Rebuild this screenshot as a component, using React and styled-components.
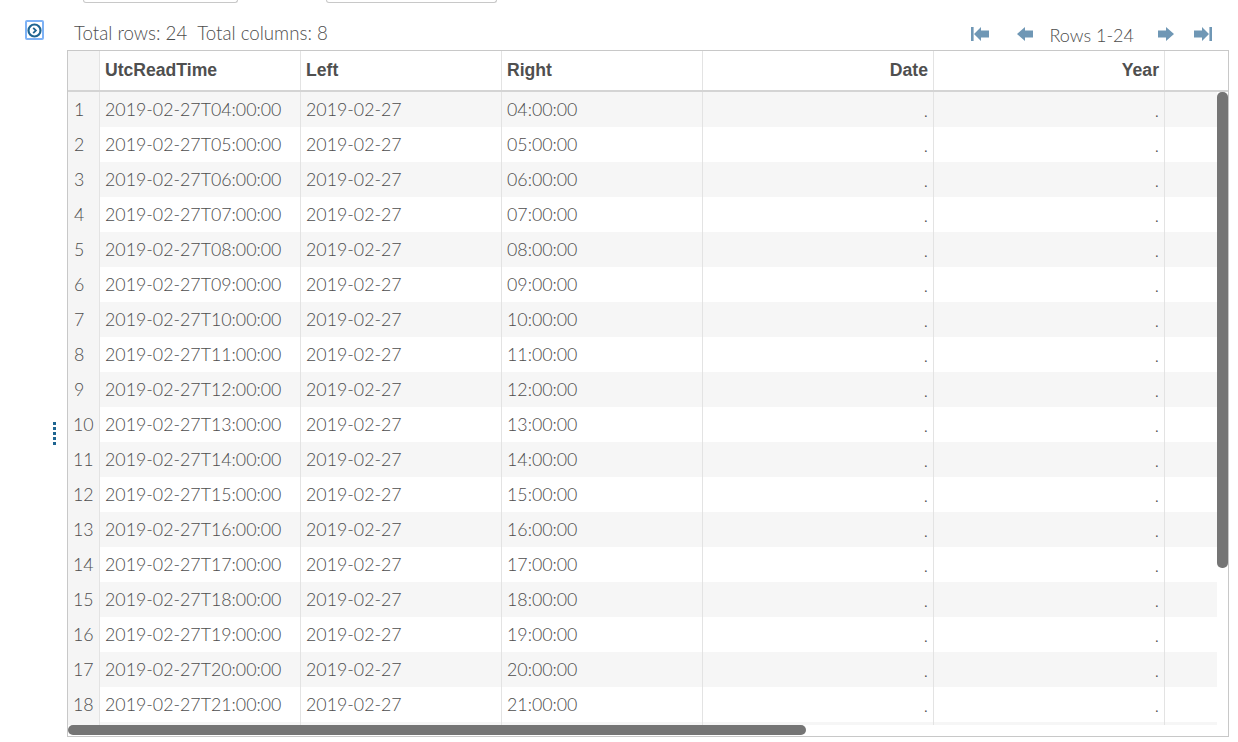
import React from "react";
import styled, { createGlobalStyle } from "styled-components";

const Global = createGlobalStyle`
  html, body { margin: 0; padding: 0; background: #fff; height: 742px; overflow: hidden; }
  * { box-sizing: border-box; }
`;

const Page = styled.div`
  width: 1238px;
  height: 742px;
  overflow: hidden;
  display: flex;
  flex-direction: column;
  font-family: Lato, sans-serif;
  font-weight: 300;
  color: #4d4d4d;
`;

const FilterBar = styled.div`
  height: 3px;
  display: flex;
  padding-left: 83px;
  gap: 88px;
`;

const FilterField = styled.div`
  width: ${(p) => p.$w}px;
  height: 3px;
  background: #fff;
  border: 1px solid #c8c8c8;
  border-top: none;
  border-radius: 0 0 3px 3px;
`;

const Body = styled.div`
  display: flex;
  height: 734px;
  padding-top: 17px;
`;

const Gutter = styled.div`
  width: 67px;
  flex: none;
  display: flex;
  flex-direction: column;
  align-items: flex-start;
  padding-left: 25px;
`;

const ToggleButton = styled.div`
  width: 19px;
  height: 20px;
  background: #fff;
  border: 2px solid #7eb2f5;
  border-radius: 2px;
  display: flex;
  align-items: center;
  justify-content: center;
`;

const SplitterDots = styled.div`
  margin: 382px 0 0 28px;
  width: 3px;
  height: 23px;
  background: repeating-linear-gradient(to bottom, #1f6591 0 3px, transparent 3px 5px);
`;

const Main = styled.div`
  width: 1162px;
  flex: none;
  display: flex;
  flex-direction: column;
`;

const Toolbar = styled.div`
  height: 30px;
  display: flex;
  align-items: flex-start;
  justify-content: space-between;
  padding: 3px 17px 0 7px;
  font-size: 18px;
  line-height: 22px;
`;

const Totals = styled.div`
  display: flex;
  gap: 10px;
  font-size: 18.7px;
  margin-top: -1px;
`;

const Pager = styled.div`
  display: flex;
  align-items: center;
  height: 22px;
`;

const PagerIcon = styled.svg`
  width: ${(p) => p.$w}px;
  height: 14px;
  flex: none;
  margin-left: ${(p) => p.$ml || 0}px;
  fill: #6f97b5;
`;

const PagerLabel = styled.span`
  margin: 2px 24px 0 16px;
  white-space: nowrap;
`;

const GridBox = styled.div`
  position: relative;
  height: 687px;
  border: 1px solid #c8c8c8;
  overflow: hidden;
`;

const HeaderRow = styled.div`
  display: flex;
  height: 41px;
  border-bottom: 2px solid #d4d4d4;
`;

const HeaderCell = styled.div`
  width: ${(p) => p.$w}px;
  flex: none;
  height: 39px;
  padding: 0 5px;
  display: flex;
  align-items: center;
  justify-content: ${(p) => (p.$right ? "flex-end" : "flex-start")};
  font-family: "Liberation Sans", Arial, sans-serif;
  font-weight: 700;
  font-size: 17.6px;
  color: #4f4f4f;
  background: ${(p) => (p.$corner ? "#f5f5f5" : "#fff")};
  border-right: ${(p) => (p.$last ? "none" : "1px solid #e3e3e3")};
`;

const DataRow = styled.div`
  display: flex;
  width: 1149px;
  height: 35px;
  background: ${(p) => (p.$odd ? "#f6f6f6" : "#fff")};
`;

const RowNumber = styled.div`
  width: 32px;
  flex: none;
  padding: 0 0 2px ${(p) => (p.$wide ? 5 : 6)}px;
  display: flex;
  align-items: center;
  font-size: 17.8px;
  background: #f5f5f5;
  border-right: 1px solid #e3e3e3;
`;

const DataCell = styled.div`
  width: ${(p) => p.$w}px;
  flex: none;
  padding: ${(p) => (p.$right ? "1px 5px 0" : "0 5px 2px")};
  display: flex;
  align-items: center;
  justify-content: ${(p) => (p.$right ? "flex-end" : "flex-start")};
  font-size: 17.8px;
  border-right: ${(p) => (p.$last ? "none" : "1px solid #e3e3e3")};
`;

const VTrack = styled.div`
  position: absolute;
  top: 41px;
  right: 0;
  bottom: 0;
  width: 11px;
  background: #fff;
`;

const VThumb = styled.div`
  position: absolute;
  top: 0;
  right: 0;
  width: 11px;
  height: 476px;
  background: #757575;
  border-radius: 5px;
`;

const HTrack = styled.div`
  position: absolute;
  left: 0;
  right: 0;
  bottom: 0;
  height: 11px;
  background: #fff;
`;

const HThumb = styled.div`
  position: absolute;
  top: 0;
  left: 0;
  width: 738px;
  height: 10px;
  background: #757575;
  border-radius: 5px;
`;

const First = () => (
  <PagerIcon viewBox="0 0 18 14" $w={18}>
    <rect x="0" y="0" width="2.6" height="14" />
    <path d="M3 7 L10 0 V3.5 H18 V10.5 H10 V14 Z" />
  </PagerIcon>
);
const Prev = () => (
  <PagerIcon viewBox="0 0 16 14" $w={16} $ml={28}>
    <path d="M0 7 L8 0 V3.5 H16 V10.5 H8 V14 Z" />
  </PagerIcon>
);
const Next = () => (
  <PagerIcon viewBox="0 0 16 14" $w={16}>
    <path d="M16 7 L8 0 V3.5 H0 V10.5 H8 V14 Z" />
  </PagerIcon>
);
const Last = () => (
  <PagerIcon viewBox="0 0 18 14" $w={18} $ml={20}>
    <rect x="15.4" y="0" width="2.6" height="14" />
    <path d="M15 7 L8 0 V3.5 H0 V10.5 H8 V14 Z" />
  </PagerIcon>
);

const columns = [
  { name: "UtcReadTime", w: 201 },
  { name: "Left", w: 201 },
  { name: "Right", w: 201 },
  { name: "Date", w: 231, right: true },
  { name: "Year", w: 231, right: true },
];

const rows = Array.from({ length: 18 }, (_, i) => {
  const hour = String(i + 4).padStart(2, "0");
  return {
    id: i + 1,
    values: [`2019-02-27T${hour}:00:00`, "2019-02-27", `${hour}:00:00`, ".", "."],
  };
});

export default function App() {
  return (
    <Page>
      <Global />
      <FilterBar>
        <FilterField $w={155} />
        <FilterField $w={171} />
      </FilterBar>
      <Body>
        <Gutter>
          <ToggleButton>
            <svg width="15" height="15" viewBox="0 0 15 15">
              <circle cx="7.5" cy="7.5" r="6" fill="none" stroke="#1f6591" strokeWidth="2.2" />
              <path d="M6.2 4.8 L8.9 7.5 L6.2 10.2" fill="none" stroke="#1f6591" strokeWidth="1.8" />
            </svg>
          </ToggleButton>
          <SplitterDots />
        </Gutter>
        <Main>
          <Toolbar>
            <Totals>
              <span>Total rows: 24</span>
              <span>Total columns: 8</span>
            </Totals>
            <Pager>
              <First />
              <Prev />
              <PagerLabel>Rows 1-24</PagerLabel>
              <Next />
              <Last />
            </Pager>
          </Toolbar>
          <GridBox>
            <HeaderRow>
              <HeaderCell $w={32} $corner />
              {columns.map((c) => (
                <HeaderCell key={c.name} $w={c.w} $right={c.right}>
                  {c.name}
                </HeaderCell>
              ))}
              <HeaderCell $w={63} $last />
            </HeaderRow>
            {rows.map((r, i) => (
              <DataRow key={r.id} $odd={i % 2 === 0}>
                <RowNumber $wide={r.id > 9}>{r.id}</RowNumber>
                {columns.map((c, j) => (
                  <DataCell key={c.name} $w={c.w} $right={c.right}>
                    {r.values[j]}
                  </DataCell>
                ))}
                <DataCell $w={52} $last />
              </DataRow>
            ))}
            <DataRow $odd>
              <RowNumber />
              {columns.map((c) => (
                <DataCell key={c.name} $w={c.w} />
              ))}
              <DataCell $w={52} $last />
            </DataRow>
            <VTrack>
              <VThumb />
            </VTrack>
            <HTrack>
              <HThumb />
            </HTrack>
          </GridBox>
        </Main>
      </Body>
    </Page>
  );
}
